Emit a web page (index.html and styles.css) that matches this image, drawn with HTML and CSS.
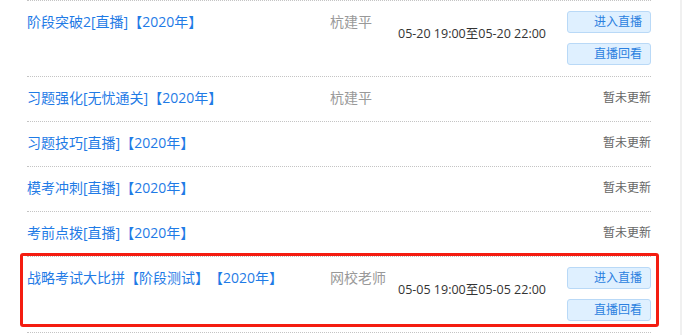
FILE: index.html
```html
<!DOCTYPE html>
<html lang="zh-CN">
<head>
<meta charset="utf-8">
<link rel="stylesheet" href="styles.css">
</head>
<body>
<div class="page">
  <div class="main">
    <ul class="list">
      <li class="row">
        <div class="title">阶段突破2[直播]【2020年】</div>
        <div class="teacher">杭建平</div>
        <div class="time">05-20 19:00至05-20 22:00</div>
        <div class="ops">
          <a class="btn">进入直播</a>
          <a class="btn">直播回看</a>
        </div>
      </li>
      <li class="row">
        <div class="title">习题强化[无忧通关]【2020年】</div>
        <div class="teacher">杭建平</div>
        <div class="time"></div>
        <div class="status">暂未更新</div>
      </li>
      <li class="row">
        <div class="title">习题技巧[直播]【2020年】</div>
        <div class="teacher"></div>
        <div class="time"></div>
        <div class="status">暂未更新</div>
      </li>
      <li class="row">
        <div class="title">模考冲刺[直播]【2020年】</div>
        <div class="teacher"></div>
        <div class="time"></div>
        <div class="status">暂未更新</div>
      </li>
      <li class="row">
        <div class="title">考前点拨[直播]【2020年】</div>
        <div class="teacher"></div>
        <div class="time"></div>
        <div class="status">暂未更新</div>
      </li>
      <li class="row marked">
        <div class="title">战略考试大比拼【阶段测试】【2020年】</div>
        <div class="teacher">网校老师</div>
        <div class="time">05-05 19:00至05-05 22:00</div>
        <div class="ops">
          <a class="btn">进入直播</a>
          <a class="btn">直播回看</a>
        </div>
        <span class="highlight"></span>
      </li>
    </ul>
  </div>
  <div class="edge"></div>
</div>
</body>
</html>
```
FILE: styles.css
```css
* { box-sizing: border-box; }
html, body { margin: 0; padding: 0; background: #fff; }
body {
  font-family: "Open Sans", "Noto Sans CJK SC", sans-serif;
  font-size: 14px;
  color: #333;
  text-spacing-trim: space-all;
}
.page {
  display: flex;
  width: 682px;
  height: 335px;
  overflow: hidden;
}
.main { flex: 1; }
.edge { width: 2px; background: #f0f0f0; }
.list {
  list-style: none;
  margin: 0 0 0 27px;
  padding: 0;
  width: 624px;
}
.row {
  position: relative;
  display: flex;
  align-items: flex-start;
  border-top: 1px dotted #c4c4c4;
  padding: 10px 0 11px;
  min-height: 45px;
}
.marked { border-bottom: 1px dotted #c4c4c4; }
.title {
  width: 303px;
  line-height: 22px;
  color: #1f7be6;
  white-space: nowrap;
}
.teacher {
  width: 68px;
  line-height: 22px;
  color: #999;
  white-space: nowrap;
}
.time {
  flex: 1;
  margin-top: 12px;
  line-height: 22px;
  color: #333;
  font-size: 12.5px;
  white-space: nowrap;
}
.status {
  line-height: 22px;
  color: #666;
  font-size: 12px;
}
.ops {
  display: flex;
  flex-direction: column;
  gap: 10px;
  width: 84px;
}
.btn {
  display: block;
  height: 22px;
  line-height: 20px;
  border: 1px solid #b9d9f7;
  border-radius: 3px;
  background: #dff0ff;
  color: #2a7fe0;
  font-size: 12px;
  text-align: right;
  padding-right: 8px;
}
.highlight {
  position: absolute;
  left: -7px;
  top: -4px;
  width: 639px;
  height: 74px;
  border: 3px solid #f41c10;
  border-radius: 3px;
  pointer-events: none;
}
```
